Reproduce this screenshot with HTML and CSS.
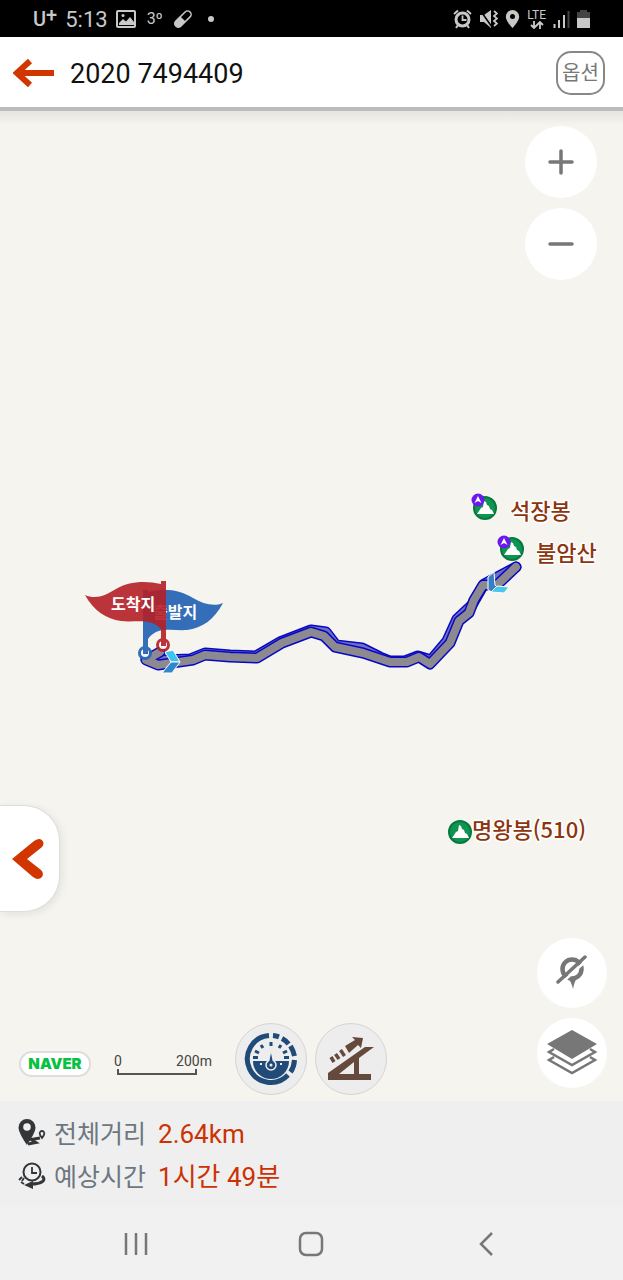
FILE: index.html
```html
<!DOCTYPE html>
<html lang="ko">
<head>
    <meta charset="UTF-8">
    <meta name="viewport" content="width=device-width, initial-scale=1.0">
    <title>2020 7494409</title>
    <link rel="stylesheet" href="styles.css">
</head>
<body>
    <div class="status-bar">
        <div class="status-left">
            <span class="carrier">U<sup>+</sup></span>
            <span class="clock">5:13</span>
            <svg class="icon-photo" width="20" height="18" viewBox="0 0 20 18">
                <rect x="1" y="1" width="18" height="16" rx="1" fill="none" stroke="#c8c8c8" stroke-width="2"/>
                <circle cx="7" cy="5.500" r="1.500" fill="#c8c8c8"/>
                <path d="M3 13l4-4 3 2.500 4-4.500 4 5v3H3z" fill="#c8c8c8"/>
            </svg>
            <span class="temp">3º</span>
            <svg class="icon-pill" width="20" height="20" viewBox="0 0 20 20">
                <g transform="rotate(45 10 10)">
                    <rect x="6.500" y="0" width="7" height="20" rx="3.500" fill="none" stroke="#c8c8c8" stroke-width="1.500"/>
                    <path d="M6 10h8v6.500a4 4 0 0 1-8 0z" fill="#c8c8c8"/>
                </g>
            </svg>
            <span class="dot"></span>
        </div>
        <div class="status-right">
            <svg width="19" height="20" viewBox="0 0 19 20">
                <circle cx="9.500" cy="10.500" r="6.500" fill="none" stroke="#c8c8c8" stroke-width="3"/>
                <path d="M9.500 6.500v4.500h4" fill="none" stroke="#c8c8c8" stroke-width="1.800"/>
                <path d="M1 5l4-3.500M18 5l-4-3.500M5 16l-2 3M14 16l2 3" stroke="#c8c8c8" stroke-width="2"/>
            </svg>
            <svg width="19" height="20" viewBox="0 0 19 20">
                <path d="M1 6h4l7-5v18l-7-6H1z" fill="#c8c8c8"/>
                <path d="M1 1l12 17" stroke="#000" stroke-width="1.500"/>
                <path d="M15 2l3 2.500-3 2.500 3 2.500-3 2.500 3 2.500-3 2.500" fill="none" stroke="#c8c8c8" stroke-width="1.800"/>
            </svg>
            <svg width="15" height="20" viewBox="0 0 15 20">
                <path d="M7.500 1a6.700 6.700 0 0 0-6.700 6.700C.800 12 7.500 19 7.500 19s6.700-7 6.700-11.300A6.700 6.700 0 0 0 7.500 1z" fill="#c8c8c8"/>
                <circle cx="7.500" cy="7.500" r="2.500" fill="#000"/>
            </svg>
            <span class="lte">
                <span>LTE</span>
                <svg width="14" height="8" viewBox="0 0 14 8">
                    <path d="M4 0v6.500M1 4l3 3 3-3M10 8V1.500M7 4l3-3 3 3" fill="none" stroke="#c8c8c8" stroke-width="1.800"/>
                </svg>
            </span>
            <svg class="icon-signal" width="17" height="18" viewBox="0 0 17 18">
                <path d="M1.500 14v4M6 10v8M11 5v13" stroke="#c8c8c8" stroke-width="2"/>
                <path d="M15.500 1v17" stroke="#444" stroke-width="2"/>
            </svg>
            <svg class="icon-battery" width="13" height="18" viewBox="0 0 13 18">
                <path d="M3 0h7v2h3v7H0V2h3z" fill="#444"/>
                <path d="M0 8h13v10H0z" fill="#c8c8c8"/>
            </svg>
        </div>
    </div>

    <header class="header">
        <button class="back-btn" aria-label="뒤로">
            <svg width="42" height="30" viewBox="0 0 42 30">
                <path d="M41 15H5M17 3L4 15l13 12" fill="none" stroke="#d23600" stroke-width="6"/>
            </svg>
        </button>
        <h1>2020 7494409</h1>
        <button class="option-btn">옵션</button>
    </header>

    <main class="map">
        <svg class="map-canvas" viewBox="0 111 623 990">
            <defs>
                <g id="peak">
                    <circle r="11" fill="#0c9650" stroke="#087840" stroke-width="2"/>
                    <path d="M-8 6l4-6 2-1 1-6 2 1 1 3 2 1 1 3 2 1 2 4z" fill="#fff"/>
                </g>
                <g id="badge">
                    <circle r="6.500" fill="#6a18ee"/>
                    <path d="M0-4l3.500 7L0 1l-3.500 2z" fill="#fff"/>
                </g>
            </defs>

            <!-- return track, slightly off the outbound one -->
            <path class="track-edge" d="M516 567L484 584 472 605 457 619 447 641 431 660 418 656 405 661 390 661 380 657 362 648 336 645 326 632 311 630 280 642 256 656 230 655 205 653 190 659 163 660 146 659"/>
            <path class="track-alt" d="M516 567L484 584 472 605 457 619 447 641 431 660 418 656 405 661 390 661 380 657 362 648 336 645 326 632 311 630 280 642 256 656 230 655 205 653 190 659 163 660 146 659"/>
            <!-- outbound track -->
            <path class="track-edge" d="M516 567L497 585 483 585 474 600 469 613 459 621 450 643 430 664 419 657 407 662 390 662 363 653 335 647 324 636 311 632 282 643 257 658 230 657 205 655 193 660 158 665 146 660 160 652"/>
            <path class="track-fill" d="M516 567L497 585 483 585 474 600 469 613 459 621 450 643 430 664 419 657 407 662 390 662 363 653 335 647 324 636 311 632 282 643 257 658 230 657 205 655 193 660 158 665 146 660 160 652"/>

            <!-- direction arrows -->
            <path d="M488 577l6-5 1 13 3 3-6 4-4-2z" fill="#397fc6" stroke="#fff"/>
            <path d="M491 592l6-6 12 1-5 6z" fill="#48c6ed" stroke="#fff"/>
            <path d="M165 652l8-2 7 12h-9z" fill="#3cc5ee" stroke="#fff"/>
            <path d="M171 662h9l-8 11h-10z" fill="#3187cd" stroke="#fff"/>

            <!-- start flag -->
            <g opacity=".94">
                <path d="M143 590h5v58h-5zM148 592c17-5 34-1 45 6 10 6 21 9 30 5-9 17-21 25-36 27-14 1-30-4-39 9z" fill="#2865b5"/>
                <circle cx="145" cy="653" r="5.500" fill="#fff" stroke="#2865b5" stroke-width="3"/>
                <path d="M143 646h5v8h-5z" fill="#2865b5"/>
                <text class="flag-text" x="153" y="618">출발지</text>
            </g>
            <!-- finish flag -->
            <g opacity=".9">
                <path d="M161 581h5v57h-5zM161 584c-17-4-34-2-45 5-10 6-20 11-31 6 9 16 21 24 36 26 14 2 29-4 40 8z" fill="#b52027"/>
                <circle cx="163" cy="645" r="5.500" fill="#fff" stroke="#b52027" stroke-width="3"/>
                <path d="M161 638h5v8h-5z" fill="#b52027"/>
            </g>
            <text class="flag-text" x="111" y="610">도착지</text>

            <use href="#peak" x="485" y="508"/>
            <use href="#badge" x="478" y="500"/>
            <text class="place" x="510" y="519">석장봉</text>
            <use href="#peak" x="512" y="549"/>
            <use href="#badge" x="504" y="542"/>
            <text class="place" x="536" y="561">불암산</text>
            <use href="#peak" x="460" y="832"/>
            <text class="place" x="472" y="838">명왕봉(510)</text>
        </svg>

        <div class="zoom-controls">
            <button class="round-btn" aria-label="확대">
                <svg width="26" height="26" viewBox="0 0 26 26">
                    <path d="M2 13h22M13 2v22" stroke="#777" stroke-width="3.500" stroke-linecap="round"/>
                </svg>
            </button>
            <button class="round-btn" aria-label="축소">
                <svg width="26" height="26" viewBox="0 0 26 26">
                    <path d="M2 13h22" stroke="#777" stroke-width="3.500" stroke-linecap="round"/>
                </svg>
            </button>
        </div>

        <button class="side-tab" aria-label="열기">
            <svg width="32" height="40" viewBox="0 0 32 40">
                <path d="M27 0c4 0 6 5 3 8L15 20l14 11c4 4 1 9-3 9-2 0-3-1-5-2L0 20 22 2c2-1 3-2 5-2z" fill="#d23600"/>
            </svg>
        </button>

        <div class="layer-controls">
            <button class="round-btn" aria-label="현재 위치">
                <svg width="32" height="36" viewBox="0 0 32 36">
                    <circle cx="16" cy="14" r="9.500" fill="none" stroke="#777" stroke-width="4.500"/>
                    <path d="M11 22c4 2 8 2 11 0-3 3-4 7-5 12-1-5-3-9-6-12z" fill="#777"/>
                    <path d="M4 29.500L31 5" stroke="#fff" stroke-width="2.500"/>
                    <path d="M2 27L29 2" stroke="#777" stroke-width="3.500" stroke-linecap="round"/>
                </svg>
            </button>
            <button class="round-btn" aria-label="지도 종류">
                <svg width="52" height="46" viewBox="0 0 52 46">
                    <path d="M26 0l25 14-25 15L1 14z" fill="#777"/>
                    <path d="M8 19l-5 3 23 13 23-13-5-3M8 27l-5 3 23 13 23-13-5-3" fill="none" stroke="#777" stroke-width="2.500"/>
                </svg>
            </button>
        </div>

        <div class="map-bottom">
            <span class="naver">NAVER</span>
            <div class="scale">
                <div class="scale-text"><span>0</span><span>200m</span></div>
                <div class="scale-line"></div>
            </div>
            <button class="round-btn tool" aria-label="속도">
                <svg width="54" height="54" viewBox="0 0 54 54">
                    <path d="M25 3.500A23.500 23.500 0 1 0 44 43" fill="none" stroke="#204a77" stroke-width="5"/>
                    <path d="M29 3.500q3 .2 6 1.300M38 6.500q4 2 6.500 5.500M46.500 14q3 5 4 10M50.500 28q-.4 7-4 12" fill="none" stroke="#204a77" stroke-width="5"/>
                    <path d="M9 29h36a18 18 0 0 1-36 0z" fill="#204a77"/>
                    <path d="M27 10v4M17 13l2 3M37 13l-2 3M11 19l4 2M43 19l-4 2M9 25.500h5M40 25.500h5" stroke="#204a77" stroke-width="3"/>
                    <circle cx="27" cy="33" r="5" fill="#204a77" stroke="#ededed" stroke-width="1.500"/>
                    <path d="M27 21l2 10h-4z" fill="#204a77"/>
                    <circle cx="27" cy="33" r="1.500" fill="#ededed"/>
                    <path d="M16 32h2M36 32h2" stroke="#ededed" stroke-width="2"/>
                </svg>
            </button>
            <button class="round-btn tool" aria-label="경사도">
                <svg width="48" height="44" viewBox="0 0 48 44">
                    <path d="M1 36L38 10h9L32 21v16h12v6H1zM12 37h15V25z" fill="#65493d" fill-rule="evenodd"/>
                    <path d="M18 9L28 3l-3-3 11 1-2 10-3-3-9 8z" fill="#65493d"/>
                    <path d="M4 20l3 5M8.500 17l3.500 5M13.500 13l4 6" stroke="#65493d" stroke-width="3.500"/>
                </svg>
            </button>
        </div>
    </main>

    <section class="info">
        <div class="info-row">
            <svg width="28" height="28" viewBox="0 0 28 28">
                <path d="M9 0a8.500 8.500 0 0 0-8.500 8.500C.500 14 9 26 9 26s8.500-12 8.500-17.500A8.500 8.500 0 0 0 9 0z" fill="#333638"/>
                <circle cx="9" cy="8" r="3.800" fill="#efefef"/>
                <path d="M10 25l8-1.500-5-3 9-1.500" fill="none" stroke="#333638" stroke-width="2.800"/>
                <path d="M24 12a2.300 2.300 0 0 0-2.300 2.500c0 1.500 2.300 4.500 2.300 4.500s2.300-3 2.300-4.500A2.300 2.300 0 0 0 24 12z" fill="none" stroke="#333638" stroke-width="1.800"/>
            </svg>
            <span class="info-label">전체거리</span>
            <span class="info-value">2.64km</span>
        </div>
        <div class="info-row">
            <svg width="28" height="28" viewBox="0 0 28 28">
                <circle cx="14" cy="10" r="8.500" fill="none" stroke="#333638" stroke-width="2"/>
                <path d="M14 5v6h5" fill="none" stroke="#333638" stroke-width="1.800"/>
                <path d="M24 14c5 4 0 8-11 8" fill="none" stroke="#333638" stroke-width="3"/>
                <path d="M6 23l9-4v8z" fill="#333638"/>
                <path d="M4 15l-3 3M3 20l3 2M6 16l-2 3" stroke="#333638" stroke-width="1.800"/>
            </svg>
            <span class="info-label">예상시간</span>
            <span class="info-value">1시간 49분</span>
        </div>
    </section>

    <nav class="nav-bar">
        <button aria-label="최근 앱">
            <svg width="24" height="24" viewBox="0 0 24 24">
                <path d="M2 1v22M12 1v22M22 1v22" stroke="#777" stroke-width="2.500"/>
            </svg>
        </button>
        <button aria-label="홈">
            <svg width="26" height="26" viewBox="0 0 26 26">
                <rect x="2" y="2" width="22" height="22" rx="6" fill="none" stroke="#777" stroke-width="2.500"/>
            </svg>
        </button>
        <button aria-label="뒤로 가기">
            <svg width="16" height="24" viewBox="0 0 16 24">
                <path d="M14 1L3 12l11 11" fill="none" stroke="#777" stroke-width="2.500"/>
            </svg>
        </button>
    </nav>
</body>
</html>
```

FILE: styles.css
```css
* {
    box-sizing: border-box;
}

body {
    font-family: Roboto, 'Noto Sans CJK KR', sans-serif;
    margin: 0;
    min-height: 100vh;
    display: flex;
    flex-direction: column;
    background: #f1f1f1;
}

button {
    font-family: inherit;
    border: none;
    background: none;
    padding: 0;
    cursor: pointer;
}

svg {
    display: block;
    flex-shrink: 0;
}

/* status bar */
.status-bar {
    display: flex;
    justify-content: space-between;
    align-items: center;
    height: 37px;
    padding: 0 33px;
    background: #000;
    color: #c8c8c8;
}

.status-left {
    display: flex;
    align-items: center;
    gap: 8px;
}

.carrier {
    font-size: 20px;
    font-weight: 500;
    line-height: 24px;
}

.carrier sup {
    font-size: 20px;
    line-height: 0;
    vertical-align: 4px;
}

.clock {
    font-size: 22px;
    line-height: 37px;
    padding-top: 2px;
}

.temp {
    font-size: 16px;
    margin-left: 3px;
}

.icon-pill {
    margin-left: 2px;
}

.dot {
    width: 6px;
    height: 6px;
    margin-left: 7px;
    border-radius: 50%;
    background: #c8c8c8;
}

.status-right {
    display: flex;
    align-items: center;
    gap: 7px;
}

.lte {
    display: flex;
    flex-direction: column;
    align-items: center;
    font-size: 12px;
    line-height: 12px;
}

/* header */
.header {
    display: flex;
    align-items: center;
    height: 74px;
    padding: 2px 18px 0 13px;
    background: #fff;
    border-bottom: 4px solid #bcbcbc;
}

.header h1 {
    flex: 1;
    margin: 2px 0 0 15px;
    font-size: 27px;
    font-weight: 400;
    line-height: 32px;
    color: #111;
}

.option-btn {
    width: 49px;
    height: 44px;
    border: 2px solid #888;
    border-radius: 15px;
    font-size: 20px;
    line-height: 24px;
    color: #777;
}

/* map */
.map {
    position: relative;
    flex: 1;
    background: linear-gradient(#e6e5e0, #f5f4ef 14px);
}

.map-canvas {
    width: 100%;
    height: auto;
}

.track-edge,
.track-fill,
.track-alt {
    fill: none;
    stroke-linecap: round;
    stroke-linejoin: round;
}

.track-edge {
    stroke: #0808c4;
    stroke-width: 11px;
}

.track-fill {
    stroke: #8c8a90;
    stroke-width: 8px;
}

.track-alt {
    stroke: #7070c0;
    stroke-width: 8px;
}

.place {
    font-family: 'Noto Sans CJK KR', sans-serif;
    font-size: 22px;
    font-weight: 500;
    fill: #8c350e;
    stroke: #fff;
    stroke-width: 3px;
    stroke-linejoin: round;
    paint-order: stroke;
}

.flag-text {
    font-size: 16px;
    font-weight: 700;
    fill: #fff;
}

.round-btn {
    display: flex;
    align-items: center;
    justify-content: center;
    width: 72px;
    height: 72px;
    border-radius: 50%;
    background: #fff;
}

.zoom-controls,
.layer-controls {
    position: absolute;
    display: flex;
    flex-direction: column;
    gap: 10px;
}

.zoom-controls {
    top: 15px;
    right: 26px;
}

.layer-controls {
    right: 16px;
    bottom: 13px;
}

.layer-controls .round-btn {
    width: 70px;
    height: 70px;
}

.side-tab {
    position: absolute;
    left: 0;
    bottom: 189px;
    width: 60px;
    height: 107px;
    padding-left: 12px;
    background: #fff;
    border: 1px solid #ddd;
    border-left: none;
    border-radius: 0 36px 36px 0;
    box-shadow: 2px 2px 8px rgba(0, 0, 0, 0.08);
}

.map-bottom {
    position: absolute;
    left: 19px;
    bottom: 6px;
    display: flex;
    align-items: center;
}

.naver {
    width: 72px;
    border: 2px solid #ddd;
    border-radius: 13px;
    margin-top: 10px;
    background: #fff;
    font-family: Inter, sans-serif;
    font-size: 15px;
    font-weight: 900;
    line-height: 22px;
    text-align: center;
    color: #08c043;
}

.scale {
    width: 98px;
    margin: 10px 23px 0;
    font-size: 14px;
    line-height: 16px;
    color: #444;
}

.scale-text {
    display: flex;
    justify-content: space-between;
}

.scale-line {
    width: 80px;
    height: 6px;
    margin-left: 3px;
    border: 2px solid #555;
    border-top: none;
}

.tool {
    background: #ededed;
    border: 1px solid #d4d4d4;
}

.tool + .tool {
    margin-left: 8px;
}

/* distance and time */
.info {
    padding: 10px 18px;
    background: #efefef;
}

.info-row {
    display: flex;
    align-items: center;
    height: 43px;
    line-height: 43px;
}

.info-label,
.info-value {
    padding-top: 4px;
}

.info-label {
    margin-left: 8px;
    font-size: 25px;
    color: #6c7780;
}

.info-value {
    margin-left: 12px;
    font-size: 26px;
    color: #cc3204;
}

/* system navigation */
.nav-bar {
    display: flex;
    height: 73px;
    padding: 0 50px 0 48px;
    background: #f1f1f1;
}

.nav-bar button {
    flex: 1;
    display: flex;
    align-items: center;
    justify-content: center;
}
```
